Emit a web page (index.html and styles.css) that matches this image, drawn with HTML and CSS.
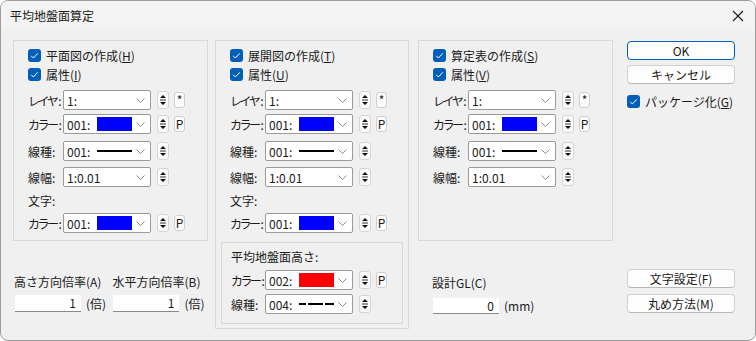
FILE: index.html
```html
<!DOCTYPE html>
<html lang="ja">
<head>
  <meta charset="UTF-8" />
  <title>平均地盤面算定</title>
  <link rel="stylesheet" href="styles.css">
</head>
<body>
  <div class="window">
    <div class="titlebar">
      <span class="title">平均地盤面算定</span>
      <svg class="close" width="12" height="12" viewBox="0 0 12 12">
        <path d="M1 1 L11 11 M11 1 L1 11" stroke="#1a1a1a" stroke-width="1.1" fill="none"/>
      </svg>
    </div>

    <div class="body">
      <!-- 平面図 -->
      <div class="col col-1">
        <div class="group group-short">
          <div class="check"><span class="box"></span>平面図の作成(<u>H</u>)</div>
          <div class="check"><span class="box"></span>属性(<u>I</u>)</div>

          <div class="row r-layer">
            <span class="lbl"><span class="kana">レイヤ</span>:</span>
            <div class="select"><span class="val">1:</span><span class="chev"></span></div>
            <span class="spin"></span>
            <span class="mini">*</span>
          </div>
          <div class="row r-color">
            <span class="lbl"><span class="kana">カラー</span>:</span>
            <div class="select"><span class="val">001:</span><span class="swatch blue"></span><span class="chev"></span></div>
            <span class="spin"></span>
            <span class="mini">P</span>
          </div>
          <div class="row r-ltype">
            <span class="lbl">線種:</span>
            <div class="select"><span class="val">001:</span><span class="line solid"></span><span class="chev"></span></div>
            <span class="spin"></span>
          </div>
          <div class="row r-lwidth">
            <span class="lbl">線幅:</span>
            <div class="select"><span class="val">1:0.01</span><span class="chev"></span></div>
            <span class="spin"></span>
          </div>
          <div class="row r-caption">
            <span class="lbl">文字:</span>
          </div>
          <div class="row r-tcolor">
            <span class="lbl"><span class="kana">カラー</span>:</span>
            <div class="select"><span class="val">001:</span><span class="swatch blue"></span><span class="chev"></span></div>
            <span class="spin"></span>
            <span class="mini">P</span>
          </div>
        </div>

        <div class="ratios">
          <div class="ratio">
            <div class="field-label">高さ方向倍率(A)</div>
            <div class="field-row"><span class="num">1</span><span class="unit">(倍)</span></div>
          </div>
          <div class="ratio">
            <div class="field-label">水平方向倍率(B)</div>
            <div class="field-row"><span class="num">1</span><span class="unit">(倍)</span></div>
          </div>
        </div>
      </div>

      <!-- 展開図 -->
      <div class="col col-2">
        <div class="group group-tall">
          <div class="check"><span class="box"></span>展開図の作成(<u>T</u>)</div>
          <div class="check"><span class="box"></span>属性(<u>U</u>)</div>

          <div class="row r-layer">
            <span class="lbl"><span class="kana">レイヤ</span>:</span>
            <div class="select"><span class="val">1:</span><span class="chev"></span></div>
            <span class="spin"></span>
            <span class="mini">*</span>
          </div>
          <div class="row r-color">
            <span class="lbl"><span class="kana">カラー</span>:</span>
            <div class="select"><span class="val">001:</span><span class="swatch blue"></span><span class="chev"></span></div>
            <span class="spin"></span>
            <span class="mini">P</span>
          </div>
          <div class="row r-ltype">
            <span class="lbl">線種:</span>
            <div class="select"><span class="val">001:</span><span class="line solid"></span><span class="chev"></span></div>
            <span class="spin"></span>
          </div>
          <div class="row r-lwidth">
            <span class="lbl">線幅:</span>
            <div class="select"><span class="val">1:0.01</span><span class="chev"></span></div>
            <span class="spin"></span>
          </div>
          <div class="row r-caption">
            <span class="lbl">文字:</span>
          </div>
          <div class="row r-tcolor">
            <span class="lbl"><span class="kana">カラー</span>:</span>
            <div class="select"><span class="val">001:</span><span class="swatch blue"></span><span class="chev"></span></div>
            <span class="spin"></span>
            <span class="mini">P</span>
          </div>

          <div class="subgroup">
            <div class="row r-subtitle">平均地盤面高さ:</div>
            <div class="row r-subcolor">
              <span class="lbl"><span class="kana">カラー</span>:</span>
              <div class="select"><span class="val">002:</span><span class="swatch red"></span><span class="chev"></span></div>
              <span class="spin"></span>
              <span class="mini">P</span>
            </div>
            <div class="row r-subltype">
              <span class="lbl">線種:</span>
              <div class="select"><span class="val">004:</span><span class="line dashed"></span><span class="chev"></span></div>
              <span class="spin"></span>
            </div>
          </div>
        </div>
      </div>

      <!-- 算定表 -->
      <div class="col col-3">
        <div class="group group-short">
          <div class="check"><span class="box"></span>算定表の作成(<u>S</u>)</div>
          <div class="check"><span class="box"></span>属性(<u>V</u>)</div>

          <div class="row r-layer">
            <span class="lbl"><span class="kana">レイヤ</span>:</span>
            <div class="select"><span class="val">1:</span><span class="chev"></span></div>
            <span class="spin"></span>
            <span class="mini">*</span>
          </div>
          <div class="row r-color">
            <span class="lbl"><span class="kana">カラー</span>:</span>
            <div class="select"><span class="val">001:</span><span class="swatch blue"></span><span class="chev"></span></div>
            <span class="spin"></span>
            <span class="mini">P</span>
          </div>
          <div class="row r-ltype">
            <span class="lbl">線種:</span>
            <div class="select"><span class="val">001:</span><span class="line solid"></span><span class="chev"></span></div>
            <span class="spin"></span>
          </div>
          <div class="row r-lwidth">
            <span class="lbl">線幅:</span>
            <div class="select"><span class="val">1:0.01</span><span class="chev"></span></div>
            <span class="spin"></span>
          </div>
        </div>

        <div class="gl">
          <div class="field-label">設計GL(C)</div>
          <div class="field-row"><span class="num">0</span><span class="unit">(mm)</span></div>
        </div>
      </div>

      <!-- ボタン -->
      <div class="side">
        <div class="button default">OK</div>
        <div class="button cancel">キャンセル</div>
        <div class="check pkg"><span class="box"></span>パッケージ化(<u>G</u>)</div>
        <div class="button font-btn">文字設定(F)</div>
        <div class="button round-btn">丸め方法(M)</div>
      </div>
    </div>
  </div>
</body>
</html>
```

FILE: styles.css
```css
* {
  box-sizing: border-box;
}
body {
  margin: 0;
  background: #ffffff;
  font-family: "Noto Sans CJK JP", "Noto Sans", sans-serif;
  font-size: 12px;
  color: #1a1a1a;
}
u {
  text-decoration-thickness: 1px;
  text-underline-offset: 1px;
}
.window {
  width: 756px;
  height: 341px;
  border: 1px solid #9c9c9c;
  border-radius: 8px;
  background: #f0f0f0;
  overflow: hidden;
}
.titlebar {
  height: 29px;
  background: #f3f3f3;
  display: flex;
  align-items: center;
  justify-content: space-between;
  padding: 0 11px 0 9px;
}
.title {
  line-height: 16px;
}
.close {
  display: block;
}

.body {
  display: flex;
  padding: 10px 0 0 12px;
}
.col-1 { width: 195px; }
.col-2 { width: 194px; margin-left: 7px; }
.col-3 { width: 195px; margin-left: 9px; }
.side  { width: 108px; margin-left: 14px; display: flex; flex-direction: column; }

/* group boxes */
.group {
  border: 1px solid #d9d9d9;
  padding: 5px 0 0 14px;
}
.group-short { height: 201px; }
.group-tall { height: 289px; padding-bottom: 4px; }

.subgroup {
  margin: 9px 5px 0 -9px;
  border: 1px solid #d9d9d9;
  padding: 3px 0 9px 9px;
}

/* check boxes */
.check {
  display: flex;
  align-items: center;
  height: 19px;
  line-height: 19px;
  white-space: nowrap;
}
.box {
  width: 13px;
  height: 13px;
  border-radius: 3px;
  background: #005fb8 url("data:image/svg+xml;utf8,<svg xmlns='http://www.w3.org/2000/svg' width='13' height='13'><path d='M3.2 6.8 L5.4 9 L9.8 4.3' stroke='white' stroke-width='1' fill='none'/></svg>") no-repeat center;
  margin-right: 5px;
  flex: none;
}

/* rows */
.row {
  display: flex;
  align-items: center;
  height: 20px;
  white-space: nowrap;
}
.lbl {
  width: 35px;
  flex: none;
}
.kana {
  letter-spacing: -2.5px;
  margin-right: 2px;
}
.subgroup .lbl { width: 34px; }
.r-layer  { margin-top: 6px; }
.r-color  { margin-top: 4px; }
.r-ltype  { margin-top: 7px; }
.r-lwidth { margin-top: 6px; }
.r-caption { margin-top: 3px; }
.r-tcolor { margin-top: 3px; }
.r-subcolor { margin-top: 4px; }
.r-subltype { margin-top: 4px; }

/* combo box */
.select {
  width: 88px;
  height: 20px;
  border: 1px solid #9a9a9a;
  border-radius: 2px;
  background: #ffffff;
  display: flex;
  align-items: center;
  padding-left: 3px;
  flex: none;
}
.val {
  width: 30px;
  flex: none;
}
.swatch {
  width: 35px;
  height: 14px;
  flex: none;
}
.blue { background: #0000ff; }
.red { background: #ff0000; }
.line {
  width: 35px;
  height: 2px;
  flex: none;
}
.solid { background: #000000; }
.dashed {
  background: linear-gradient(90deg, #000 0 7px, transparent 7px 9px, #000 9px 24px, transparent 24px 26px, #000 26px 35px);
}
.chev {
  width: 9px;
  height: 6px;
  margin-left: auto;
  margin-right: 5px;
  margin-top: 2px;
  background: url("data:image/svg+xml;utf8,<svg xmlns='http://www.w3.org/2000/svg' width='9' height='6'><path d='M0.5 0.5 L4.5 4.5 L8.5 0.5' stroke='%23888' stroke-width='1' fill='none'/></svg>") no-repeat center;
}

/* up-down spinner */
.spin {
  width: 12px;
  height: 18px;
  margin-left: 6px;
  flex: none;
  border: 1px solid #d4d4d4;
  border-radius: 3px;
  background: #fbfbfb url("data:image/svg+xml;utf8,<svg xmlns='http://www.w3.org/2000/svg' width='10' height='16'><path d='M2 6 L5 3 L8 6 Z M2 10 L8 10 L5 13 Z' fill='%23111'/><path d='M2 8 H8' stroke='%23333' stroke-width='1'/></svg>") no-repeat center;
}
.mini {
  width: 11px;
  height: 16px;
  margin-left: 5px;
  flex: none;
  border: 1px solid #cfcfcf;
  border-radius: 3px;
  background: #fcfcfc;
  display: flex;
  align-items: center;
  justify-content: center;
  line-height: 14px;
  font-size: 12px;
}

/* bottom fields */
.field-label {
  line-height: 20px;
  height: 20px;
  white-space: nowrap;
}
.field-row {
  display: flex;
  align-items: center;
  white-space: nowrap;
}
.num {
  width: 66px;
  height: 17px;
  background: #ffffff;
  border-bottom: 1px solid #8a8a8a;
  text-align: right;
  padding-right: 5px;
  line-height: 16px;
  flex: none;
}
.unit {
  margin-left: 5px;
}
.ratios {
  display: flex;
  margin-top: 31px;
}
.ratio {
  width: 101px;
  padding-left: 1px;
}
.ratio + .ratio {
  padding-left: 2px;
}
.ratio .field-row {
  margin-top: 3px;
  padding-left: 1px;
}
.gl {
  margin-top: 32px;
  padding-left: 14px;
}
.gl .field-row {
  margin-top: 4px;
  padding-left: 1px;
}
.gl .num { height: 16px; }

/* buttons */
.button {
  height: 19px;
  border: 1px solid #d0d0d0;
  border-bottom-color: #b8b8b8;
  border-radius: 4px;
  background: #fdfdfd;
  text-align: center;
  line-height: 17px;
}
.default {
  margin-top: 1px;
  border: 1px solid #005fb8;
  box-shadow: inset 0 0 0 1px #ffffff;
}
.cancel { margin-top: 5px; }
.pkg { margin-top: 8px; }
.font-btn { margin-top: 158px; }
.round-btn { margin-top: 6px; }
```
